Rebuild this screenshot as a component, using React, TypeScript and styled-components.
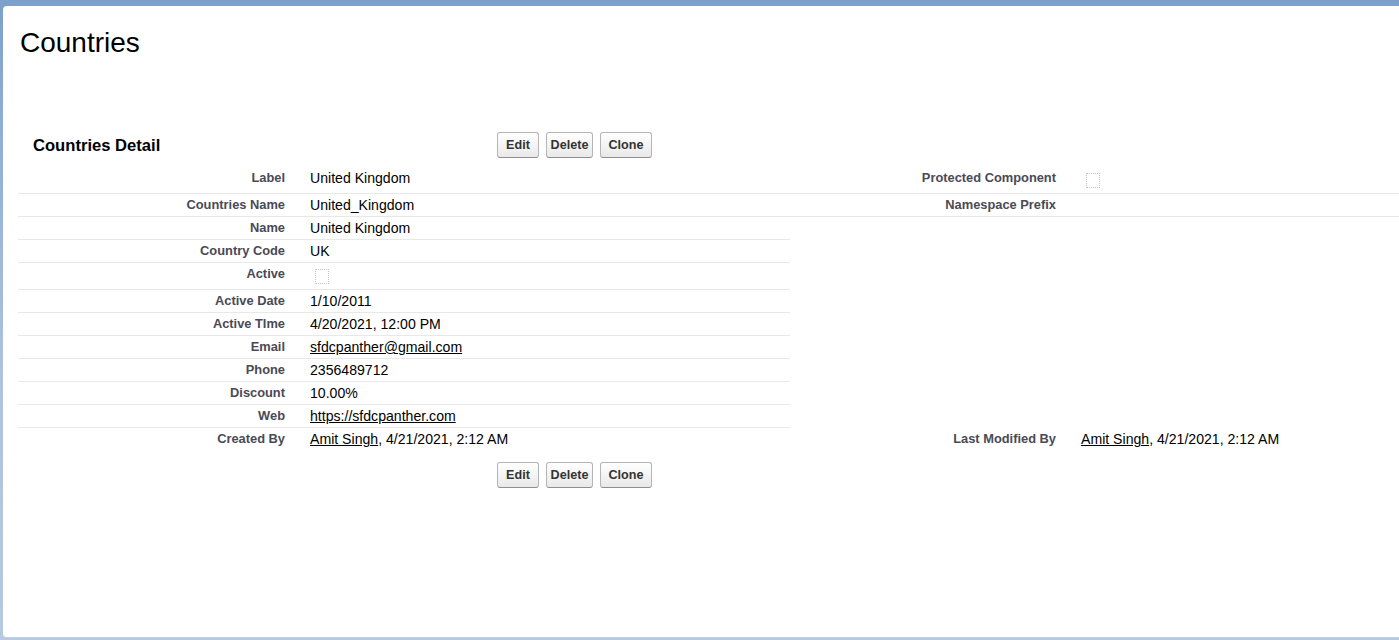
import React from "react";
import styled, { createGlobalStyle } from "styled-components";

const GlobalStyle = createGlobalStyle`
  html, body { margin: 0; padding: 0; }
  body {
    background: linear-gradient(180deg, #7ba0cb 0px, #8eaed4 120px, #aec3df 380px, #b7c9e1 640px);
    font-family: "Liberation Sans", Arial, sans-serif;
  }
`;

const Page = styled.div`
  box-sizing: border-box;
  height: 640px;
  padding: 6px 0 2px 3px;
`;

const Card = styled.main`
  box-sizing: border-box;
  height: 632px;
  background: #fff;
  border-radius: 4px 0 0 4px;
  border-bottom: 1px solid #c6d0dd;
  overflow: hidden;
`;

const PageTitle = styled.h1`
  margin: 0;
  padding: 21px 0 0 17px;
  font-size: 28px;
  line-height: 32px;
  font-weight: normal;
  color: #000;
`;

const Detail = styled.section`
  margin: 73px 0 0 15px;
`;

const BlockBar = styled.div<{ $top?: number }>`
  display: flex;
  align-items: center;
  height: 26px;
  margin-top: ${(p) => p.$top ?? 0}px;
`;

const BlockTitle = styled.h2`
  box-sizing: border-box;
  width: 479px;
  margin: 0;
  padding: 2px 0 0 15px;
  font-size: 16.6px;
  font-weight: bold;
  color: #000;
`;

const Buttons = styled.div`
  display: flex;
  gap: 7px;
`;

const Btn = styled.button<{ $w: number }>`
  box-sizing: border-box;
  width: ${(p) => p.$w}px;
  height: 26px;
  padding: 0;
  font-family: "Liberation Sans", Arial, sans-serif;
  font-size: 12.6px;
  font-weight: bold;
  color: #333;
  background: linear-gradient(180deg, #ffffff 0%, #f4f4f4 50%, #e9e9e9 100%);
  border: 1px solid #b5b5b5;
  border-bottom-color: #8f8f8f;
  border-radius: 3px;
  cursor: pointer;
`;

const Table = styled.div`
  margin-top: 9px;
`;

const Row = styled.div`
  display: grid;
  grid-template-columns: 277px 495px 276px 1fr;
`;

const LabelCell = styled.div<{ $line: boolean }>`
  padding: 4px 10px 4px 0;
  text-align: right;
  font-size: 12.85px;
  line-height: 14px;
  font-weight: bold;
  color: #4a4a56;
  border-bottom: 1px solid ${(p) => (p.$line ? "#e8e8e8" : "transparent")};
`;

const ValueCell = styled.div<{ $line: boolean }>`
  padding: 4px 0 4px 15px;
  font-size: 14.1px;
  line-height: 14px;
  color: #000;
  border-bottom: 1px solid ${(p) => (p.$line ? "#e8e8e8" : "transparent")};
`;

const Link = styled.a`
  color: #000;
  text-decoration: underline;
`;

const Check = styled.span`
  display: block;
  box-sizing: border-box;
  width: 14px;
  height: 15px;
  margin: 2px 0 1px 5px;
  border: 1px dotted #c4c4c4;
  border-radius: 1px;
`;

type Val = React.ReactNode;
type Field = { label: string; value?: Val };
type RowData = { left: Field; right?: Field; line: boolean };

const checkbox = <Check />;

const rows: RowData[] = [
  { left: { label: "Label", value: "United Kingdom" }, right: { label: "Protected Component", value: checkbox }, line: true },
  { left: { label: "Countries Name", value: "United_Kingdom" }, right: { label: "Namespace Prefix", value: "" }, line: true },
  { left: { label: "Name", value: "United Kingdom" }, line: true },
  { left: { label: "Country Code", value: "UK" }, line: true },
  { left: { label: "Active", value: checkbox }, line: true },
  { left: { label: "Active Date", value: "1/10/2011" }, line: true },
  { left: { label: "Active TIme", value: "4/20/2021, 12:00 PM" }, line: true },
  { left: { label: "Email", value: <Link href="#">sfdcpanther@gmail.com</Link> }, line: true },
  { left: { label: "Phone", value: "2356489712" }, line: true },
  { left: { label: "Discount", value: "10.00%" }, line: true },
  { left: { label: "Web", value: <Link href="#">https://sfdcpanther.com</Link> }, line: true },
  {
    left: { label: "Created By", value: <><Link href="#">Amit Singh</Link>, 4/21/2021, 2:12 AM</> },
    right: { label: "Last Modified By", value: <><Link href="#">Amit Singh</Link>, 4/21/2021, 2:12 AM</> },
    line: false,
  },
];

const ButtonSet = () => (
  <Buttons>
    <Btn $w={42}>Edit</Btn>
    <Btn $w={47}>Delete</Btn>
    <Btn $w={52}>Clone</Btn>
  </Buttons>
);

export default function App() {
  return (
    <>
      <GlobalStyle />
      <Page>
        <Card>
          <PageTitle>Countries</PageTitle>
          <Detail>
            <BlockBar>
              <BlockTitle>Countries Detail</BlockTitle>
              <ButtonSet />
            </BlockBar>
            <Table>
              {rows.map((r, i) => (
                <Row key={i}>
                  <LabelCell $line={r.line}>{r.left.label}</LabelCell>
                  <ValueCell $line={r.line}>{r.left.value}</ValueCell>
                  <LabelCell $line={r.line && !!r.right}>{r.right?.label}</LabelCell>
                  <ValueCell $line={r.line && !!r.right}>{r.right?.value}</ValueCell>
                </Row>
              ))}
            </Table>
            <BlockBar $top={11}>
              <BlockTitle />
              <ButtonSet />
            </BlockBar>
          </Detail>
        </Card>
      </Page>
    </>
  );
}
